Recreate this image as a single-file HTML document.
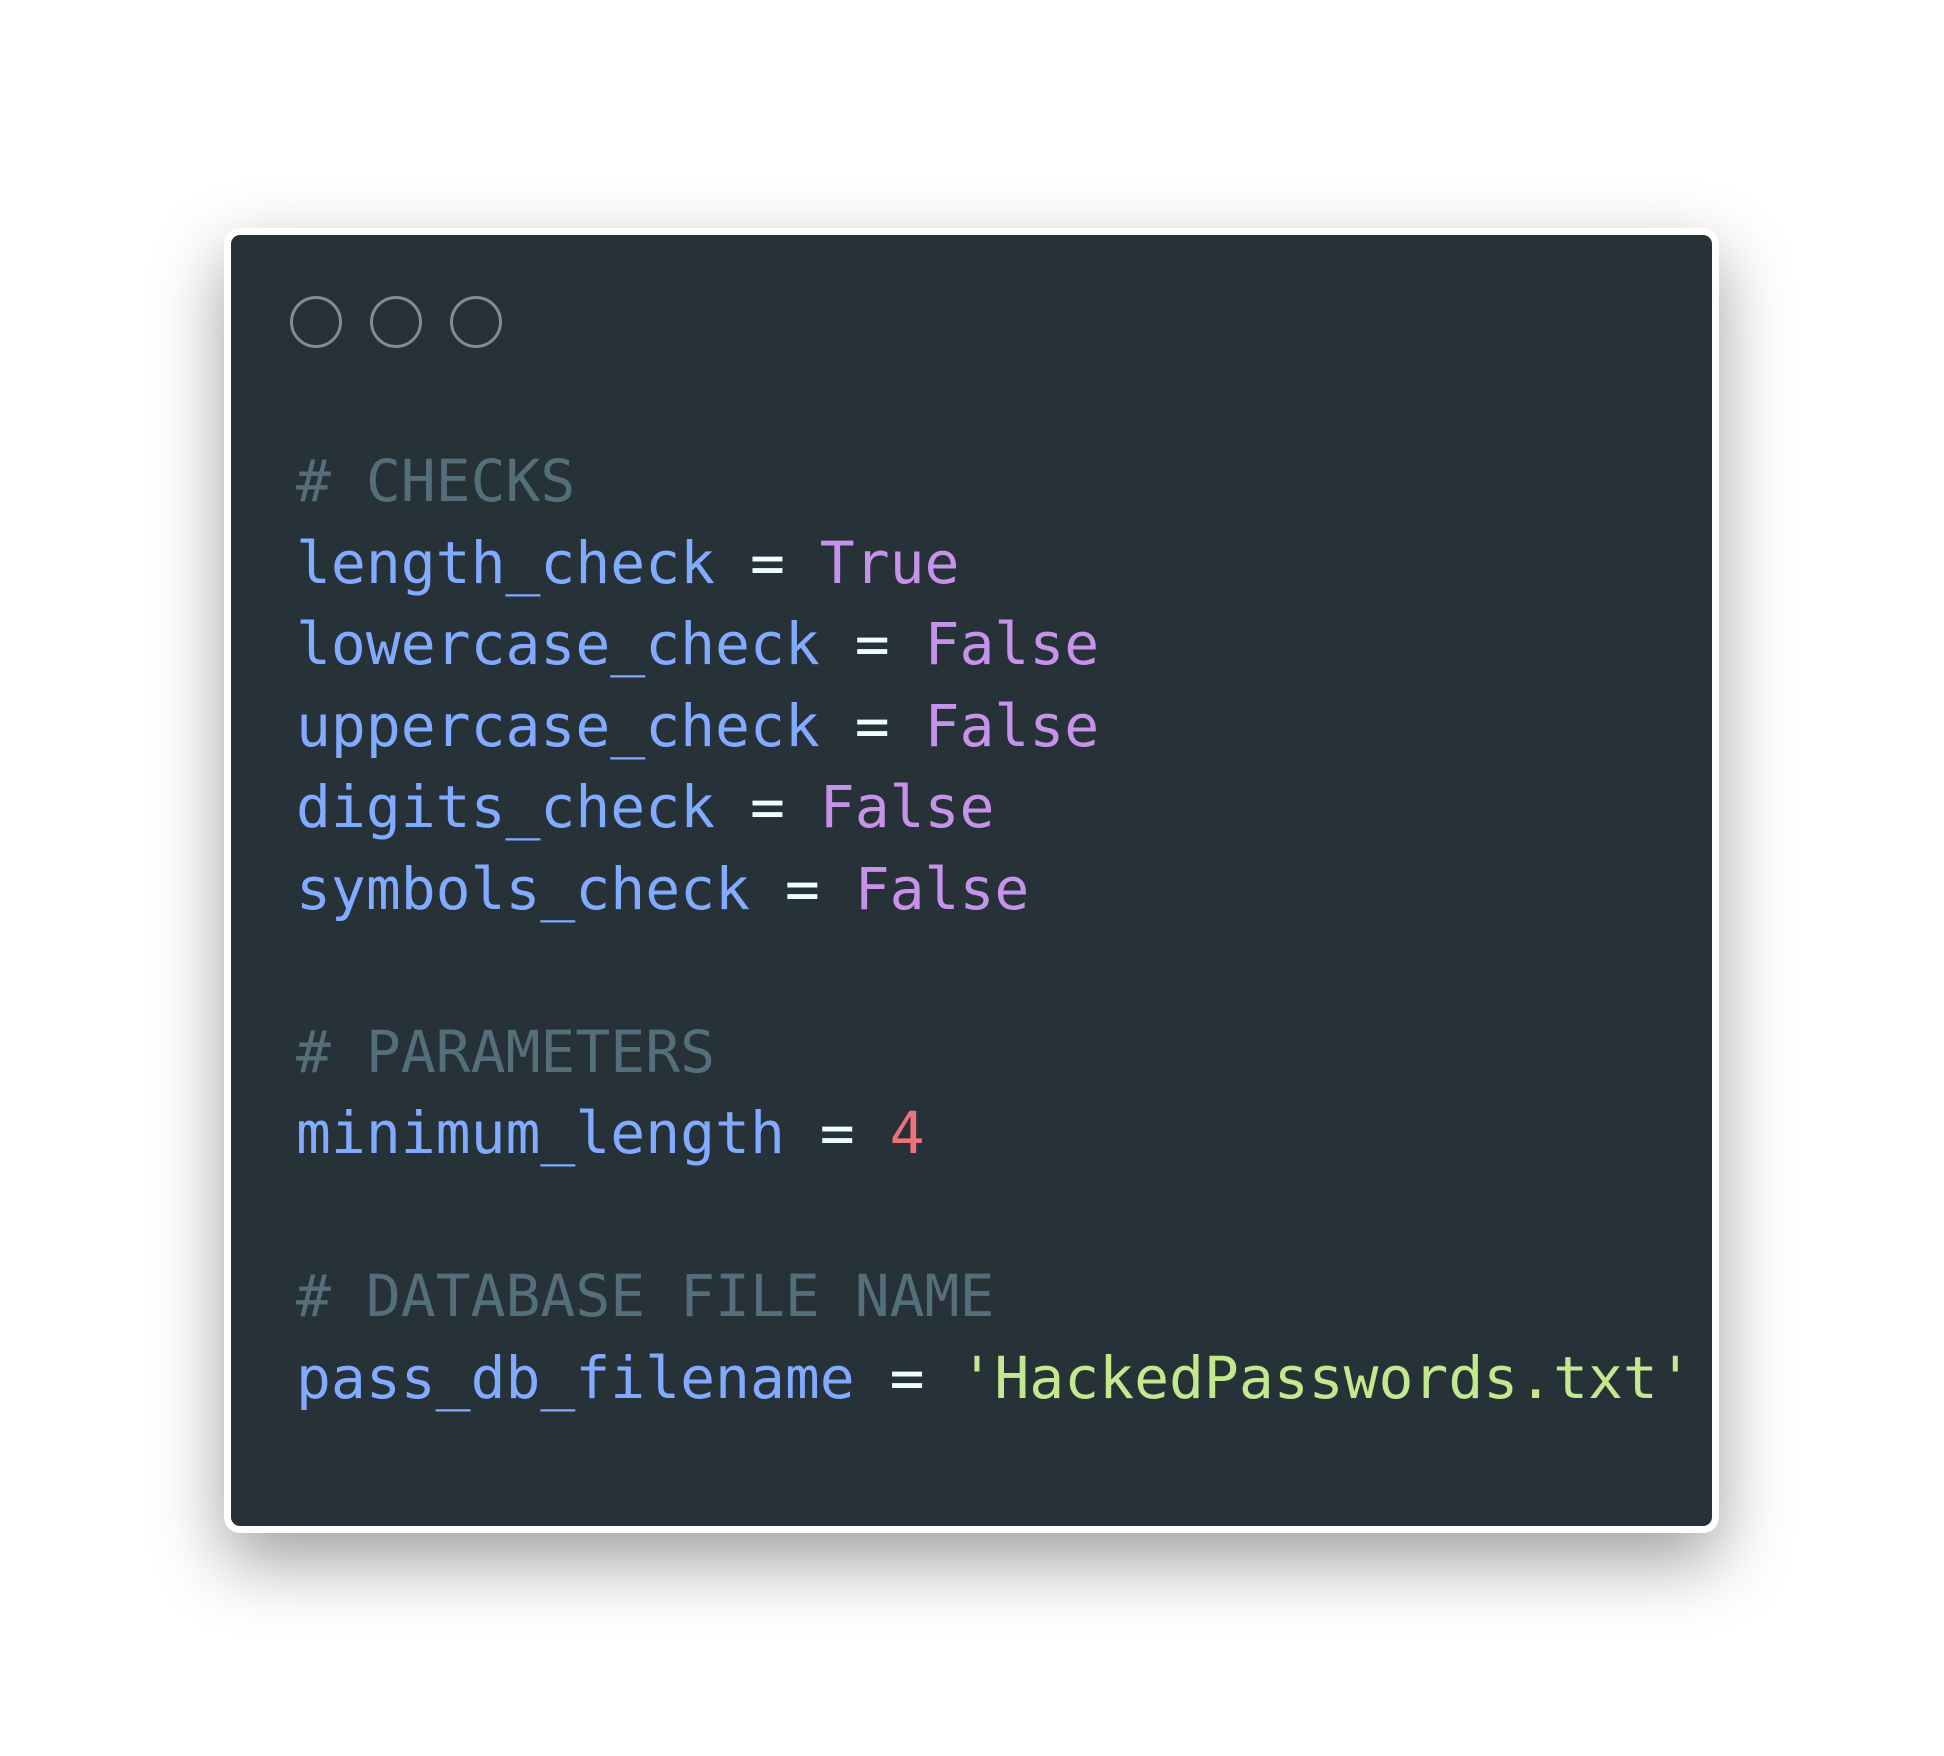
<!DOCTYPE html>
<html><head><meta charset="utf-8"><style>
html,body{margin:0;padding:0;background:#fff;width:1944px;height:1756px;overflow:hidden;}
.frame{position:absolute;left:224px;top:228px;width:1495px;height:1305px;box-sizing:border-box;background:#fff;border-radius:16px;padding:7px;box-shadow:0 28px 70px rgba(0,0,0,0.38);}
.inner{width:100%;height:100%;background:#263238;border-radius:9px;}
.dot{position:absolute;top:296px;width:46px;height:46px;border:3.5px solid #888b8c;border-radius:50%;}
pre{position:absolute;left:296px;top:441px;margin:0;font-family:"DejaVu Sans Mono","Liberation Mono",monospace;font-size:58px;line-height:81.5px;color:#eeffff;}
.c{color:#546e7a}.v{color:#82aaff}.k{color:#c792ea}.n{color:#f07178}.s{color:#c3e88d}
</style></head><body>
<div class="frame"><div class="inner"></div></div>
<div class="dot" style="left:290px"></div>
<div class="dot" style="left:370px"></div>
<div class="dot" style="left:450px"></div>
<pre><span class="c"># CHECKS</span>
<span class="v">length_check</span> = <span class="k">True</span>
<span class="v">lowercase_check</span> = <span class="k">False</span>
<span class="v">uppercase_check</span> = <span class="k">False</span>
<span class="v">digits_check</span> = <span class="k">False</span>
<span class="v">symbols_check</span> = <span class="k">False</span>

<span class="c"># PARAMETERS</span>
<span class="v">minimum_length</span> = <span class="n">4</span>

<span class="c"># DATABASE FILE NAME</span>
<span class="v">pass_db_filename</span> = <span class="s">'HackedPasswords.txt'</span></pre>
</body></html>
